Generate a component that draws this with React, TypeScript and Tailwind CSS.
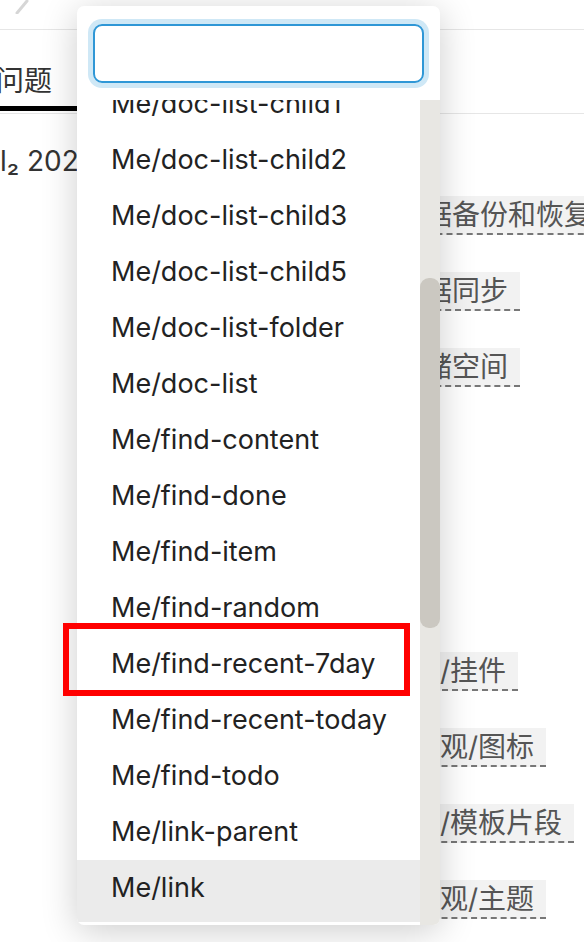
import React from "react";

const commands = [
  "Me/doc-list-child1",
  "Me/doc-list-child2",
  "Me/doc-list-child3",
  "Me/doc-list-child5",
  "Me/doc-list-folder",
  "Me/doc-list",
  "Me/find-content",
  "Me/find-done",
  "Me/find-item",
  "Me/find-random",
  "Me/find-recent-7day",
  "Me/find-recent-today",
  "Me/find-todo",
  "Me/link-parent",
  "Me/link",
];

const topicsTop = ["数据备份和恢复", "数据同步", "存储空间"];
const topicsBottom = ["市/挂件", "外观/图标", "市/模板片段", "外观/主题"];

const Topic = ({ label }: { label: string }) => (
  <div className="h-[76px]">
    <span className="inline-block h-[39px] leading-[39px] pr-[12px] bg-[#f2f2f2] border-b-2 border-dashed border-[#777] text-[28px] text-[#555]">
      {label}
    </span>
  </div>
);

const App = () => {
  const hovered = "Me/link";
  const marked = "Me/find-recent-7day";

  return (
    <div
      className="relative w-[584px] h-[942px] overflow-hidden bg-white text-[#333]"
      style={{ fontFamily: "Inter, 'Noto Sans CJK SC', sans-serif" }}
    >
      {/* Toolbar */}
      <div className="h-[30px] border-b border-[#e6e6e6]">
        <svg width="40" height="14" viewBox="0 0 40 14" className="ml-[14px]">
          <path d="M3 13 L13 1" stroke="#d6d6d6" strokeWidth="3" strokeLinecap="round" />
        </svg>
      </div>

      {/* Tabs */}
      <div className="h-[84px] flex items-end border-b border-[#e6e6e6]">
        <div className="w-[96px] flex flex-col">
          <span className="text-[28px] leading-[34px] ml-[-4px] mb-[8px]">问题</span>
          <div className="h-[5px] bg-black mb-[2px]" />
        </div>
      </div>

      {/* Content */}
      <div className="flex">
        <div className="w-[396px] shrink-0 pt-[30px] text-[28px] leading-[34px] whitespace-nowrap">
          l₂ 2021-04-13
        </div>
        <div className="pt-[82px] whitespace-nowrap">
          {topicsTop.map((t) => (
            <Topic key={t} label={t} />
          ))}
          <div className="h-[228px]" />
          <div className="ml-[16px]">
            {topicsBottom.map((t) => (
              <Topic key={t} label={t} />
            ))}
          </div>
        </div>
      </div>

      {/* Search popup */}
      <div className="absolute left-[77px] top-[6px] w-[363px] h-[919px] bg-white rounded-[7px] shadow-[0_6px_36px_rgba(0,0,0,0.2)] flex flex-col overflow-hidden">
        <div className="pt-[18px] px-[16px]">
          <input
            className="w-full h-[59px] rounded-[9px] border-2 border-[#2f97d6] shadow-[0_0_0_5px_#cfe8f6] outline-none px-3 text-[26px]"
            autoFocus={false}
          />
        </div>
        <div className="mt-[17px] flex flex-1 overflow-hidden">
          <div className="flex-1 overflow-hidden">
            <div className="mt-[-24px]">
              {commands.map((c) => (
                <div
                  key={c}
                  className={
                    c === hovered
                      ? "h-[62px] pb-[6px] pl-[34px] flex items-center bg-[#ebebeb] text-[27px] text-[#222] whitespace-nowrap"
                      : "h-[56px] pl-[34px] flex items-center text-[27px] text-[#222] whitespace-nowrap"
                  }
                >
                  {c}
                </div>
              ))}
            </div>
          </div>
          {/* Scrollbar */}
          <div className="w-[20px] bg-[#e8e7e3]">
            <div className="mt-[178px] h-[350px] rounded-[9px] bg-[#cbc8c1]" />
          </div>
        </div>
      </div>

      {/* Annotation */}
      {commands.includes(marked) && (
        <div className="absolute left-[63px] top-[623px] w-[347px] h-[73px] border-[6px] border-[#ff0000]" />
      )}
    </div>
  );
};

export default App;
